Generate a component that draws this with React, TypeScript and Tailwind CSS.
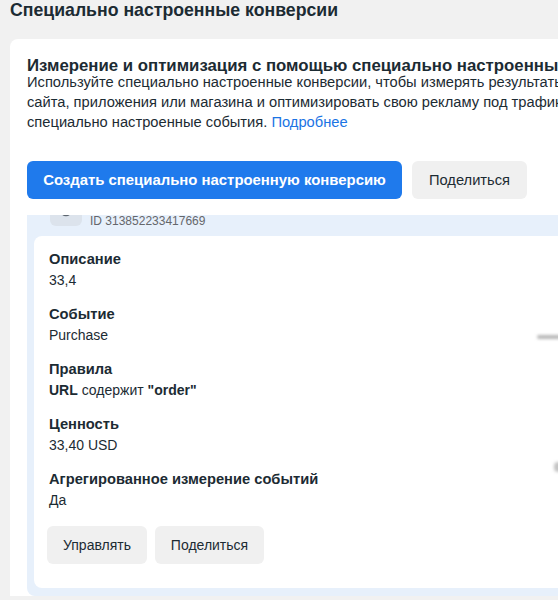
import React from "react";

const font = "font-['Liberation_Sans',Arial,sans-serif]";

type Field = { label: string; value: React.ReactNode };

const fields: Field[] = [
    { label: "Описание", value: "33,4" },
    { label: "Событие", value: "Purchase" },
    {
        label: "Правила",
        value: (
            <>
                <b>URL</b> содержит <b>"order"</b>
            </>
        ),
    },
    { label: "Ценность", value: "33,40 USD" },
    { label: "Агрегированное измерение событий", value: "Да" },
];

function GrayButton({ children, width }: { children: React.ReactNode; width: string }) {
    return (
        <button className={`h-[38px] ${width} rounded-md bg-[#f0f0f0] text-[14px] text-[#1c2b33]`}>
            {children}
        </button>
    );
}

export default function App() {
    return (
        <div className={`${font} h-[600px] w-[558px] overflow-hidden bg-[#f1f1f1] pl-[10px] text-[#1c2b33]`}>
            <h1 className="text-[17.7px] font-bold leading-[20px]">Специально настроенные конверсии</h1>

            <div className="mt-[19px] w-[640px] rounded-tl-lg bg-white px-[17px] pt-[19px]">
                <h2 className="whitespace-nowrap text-[16.8px] font-bold leading-[15px]">
                    Измерение и оптимизация с помощью специально настроенных конверсий
                </h2>
                <p className="-mt-[1px] whitespace-nowrap text-[14.7px] leading-[20px]">
                    Используйте специально настроенные конверсии, чтобы измерять результаты работы
                    <br />
                    сайта, приложения или магазина и оптимизировать свою рекламу под трафик или
                    <br />
                    специально настроенные события. <span className="text-[#1b74e4]">Подробнее</span>
                </p>

                <div className="mt-[29px] flex gap-[10px]">
                    <button className="h-[38px] w-[375px] rounded-md bg-[#1f7aec] text-[14.9px] font-bold text-white">
                        Создать специально настроенную конверсию
                    </button>
                    <button className="h-[38px] w-[115px] rounded-md bg-[#f0f0f0] text-[14.7px]">Поделиться</button>
                </div>

                <div className="mt-4 overflow-hidden rounded-b-lg bg-[#e7f0fb] px-[7px] pb-2">
                    <div className="-mt-[21px]">
                        <div className="flex items-end gap-2 pb-[10px] pl-4">
                            <div className="flex h-8 w-8 items-center justify-center rounded-md bg-[#dce3ec]">
                                <svg width="16" height="16" viewBox="0 0 16 16" fill="none">
                                    <circle cx="8" cy="8" r="5.5" stroke="#5d6670" strokeWidth="1.5" />
                                </svg>
                            </div>
                            <div className="-mb-[3px] flex flex-col">
                                <span className="text-[14px] font-bold leading-[18px]">Специально настроенная конверсия</span>
                                <span className="text-[12px] leading-[16px] text-[#65676b]">ID 313852233417669</span>
                            </div>
                        </div>

                        <div className="relative rounded-lg bg-white pb-6 pl-[15px] pt-[13px]">
                            <div className="flex flex-col gap-[14px]">
                                {fields.map((f) => (
                                    <div key={f.label} className="leading-[20px]">
                                        <div className="text-[14.7px] font-bold">{f.label}</div>
                                        <div className="mt-[1px] text-[14px]">{f.value}</div>
                                    </div>
                                ))}
                            </div>
                            <div className="mt-4 flex gap-2 -ml-[2px]">
                                <GrayButton width="w-[100px]">Управлять</GrayButton>
                                <GrayButton width="w-[109px]">Поделиться</GrayButton>
                            </div>
                            <div className="absolute left-[503px] top-[99px] h-[4px] w-[24px] rounded-full bg-[#b8b8b8] blur-[1.5px]" />
                            <div className="absolute left-[520px] top-[226px] h-[10px] w-[8px] rounded-full bg-[#c4c4c4] blur-[1.5px]" />
                        </div>
                    </div>
                </div>
            </div>
        </div>
    );
}
